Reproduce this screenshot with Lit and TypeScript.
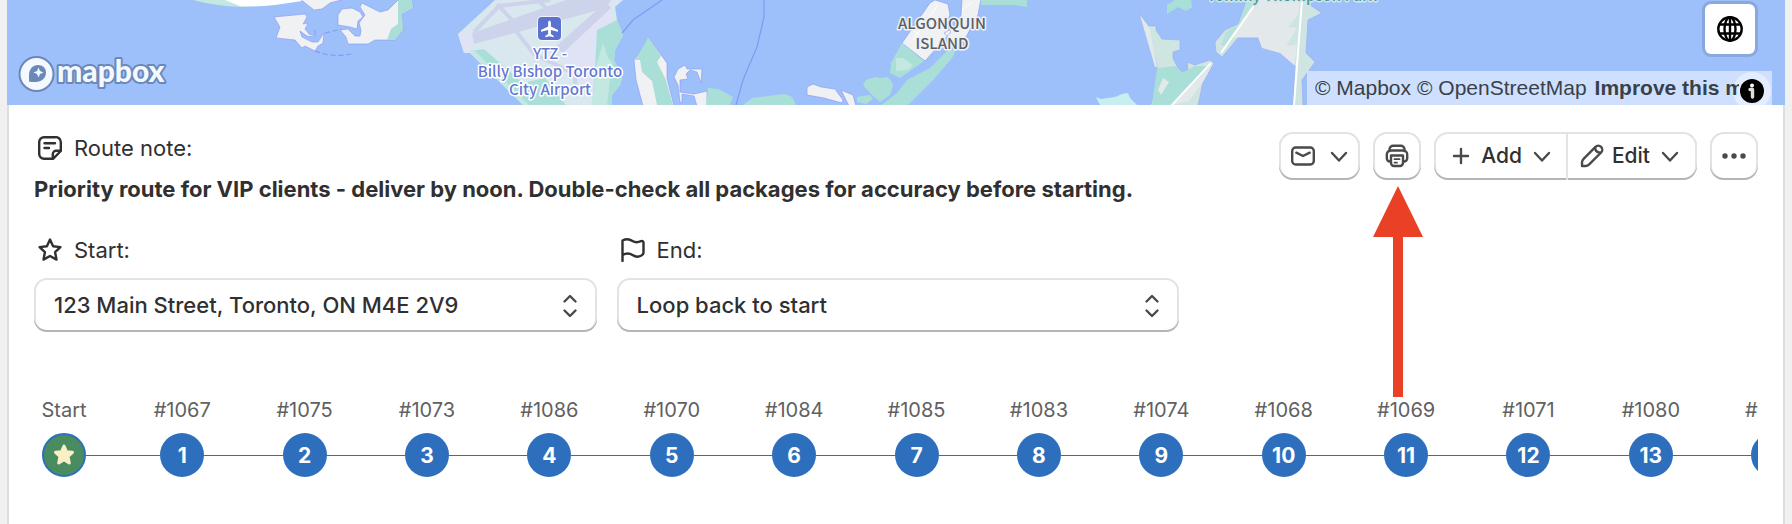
import { LitElement, html, css, svg } from "lit";
import { customElement, property } from "lit/decorators.js";

interface Stop {
  order: string;
  position: number;
}

const ORDERS = [
  "#1067", "#1075", "#1073", "#1086", "#1070", "#1084", "#1085",
  "#1083", "#1074", "#1068", "#1069", "#1071", "#1080", "#1079",
];

const STOPS: Stop[] = ORDERS.map((order, i) => ({ order, position: i + 1 }));

const icons = {
  note: svg`<path d="M9 1.2H17A5 5 0 0 1 22.800 6V15L15 22.8H6A4.8 4.8 0 0 1 1.2 18V6A4.8 4.8 0 0 1 6 1.2Z"/><path d="M22.6 14.8H18A3.2 3.2 0 0 0 14.8 18V22.6"/><path d="M6.5 7.2H17M6.5 12H11"/>`,
  star: svg`<path d="M12 1.6L15.1 8.2L22.4 9.1L17.1 14.2L18.5 21.6L12 18L5.5 21.6L6.9 14.2L1.6 9.1L8.9 8.2Z"/>`,
  flag: svg`<path d="M1.5 23V2.5C5 .7 8.500 1 11.500 3C14.500 5 17 4.500 20 3.200C21.500 2.600 22.500 3.400 22.500 4.800V14.500C22.500 16 21.500 17 20 17.800C17 19.300 14.500 19 11.500 17C8.500 15 5 15 1.500 17"/>`,
  mail: svg`<rect x="1.200" y="3.500" width="21.600" height="17" rx="3.500"/><path d="M5.300 8.700L12 12L18.700 8.700"/>`,
  down: svg`<path d="M5 9L12 16.500L19 9"/>`,
  print: svg`<path d="M4.500 7V5.500A3.700 3.700 0 0 1 8.200 1.800H15.800A3.700 3.700 0 0 1 19.500 5.500V7"/><path d="M5.500 17.500H5A3.200 3.200 0 0 1 1.800 14.300V10.500A4 4 0 0 1 5.800 6.500H18.200A4 4 0 0 1 22.200 10.500V14.300A3.200 3.200 0 0 1 19 17.500H18.500"/><path d="M6 11.500H18V19A3 3 0 0 1 15 22H9A3 3 0 0 1 6 19Z"/><path d="M9.500 15.200H14.500M9.500 18.600H12" stroke-width="1.800"/>`,
  plus: svg`<path d="M12 5V19M5 12H19"/>`,
  pencil: svg`<path d="M2 22V18.500C2 17 2.600 15.800 3.600 14.800L15.500 2.900A3.900 3.900 0 0 1 21.100 8.500L9.200 20.400C8.200 21.400 7 22 5.500 22Z"/><path d="M15.200 3.800Q15 8 20.200 8.800"/>`,
  sort: svg`<path d="M6.500 7.500L12 2L17.500 7.500M6.500 16.500L12 22L17.500 16.500"/>`,
};

@customElement("ui-icon")
class UiIcon extends LitElement {
  static styles = css`
    :host { display: inline-flex; flex: none; }
    .glyph {
      width: 24px; height: 24px; fill: none; stroke: currentColor;
      stroke-width: 2.4; stroke-linecap: round; stroke-linejoin: round;
    }
  `;
  @property() name: keyof typeof icons = "note";
  render() {
    return html`<svg class="glyph" viewBox="0 0 24 24" aria-hidden="true">${icons[this.name]}</svg>`;
  }
}

@customElement("route-map")
class RouteMap extends LitElement {
  static styles = css`
    :host { display: block; position: relative; height: 105px; overflow: hidden; background: #9dc0fb; }
    .canvas { display: block; width: 100%; height: 105px; }
    .land { fill: #f0f1f2; stroke: #8b92f5; stroke-width: 0.6; }
    .park { fill: #aadfd8; }
    .meadow { fill: #c3e8e1; }
    .shore { fill: #cfe5e1; stroke: #9da5f5; stroke-width: 0.6; }
    .sand { fill: #e3e9ea; }
    .shoal { fill: #c8eff0; }
    .field { fill: #d9e8ee; }
    .apron { fill: #dfe3f5; }
    .runway { fill: #cdd3ea; }
    .taxi { fill: none; stroke: #cdd3ea; stroke-width: 4; }
    .road { fill: none; stroke: #fff; stroke-width: 2; }
    .street { fill: none; stroke: #fff; stroke-width: 1; }
    .ferry { fill: none; stroke: #7d9cf0; stroke-width: 1.2; }
    .label {
      font: 500 15px "Noto Sans CJK SC", "Noto Sans", sans-serif;
      text-anchor: middle; paint-order: stroke; stroke: #fff; stroke-width: 3; stroke-linejoin: round;
    }
    .airport { fill: #6478d3; }
    .island { fill: #5c6065; stroke: #eef1f5; }
    .green { fill: #4f9a86; stroke: #cfe5f0; }
    .brand {
      font: 900 30px Lato, sans-serif; fill: #f4f8ff; paint-order: stroke;
      stroke: #6b88ba; stroke-width: 4; stroke-linejoin: round;
    }
    .style-switch {
      position: absolute; top: 4px; right: 30px; width: 50px; height: 50px; padding: 12px;
      border: 0; border-radius: 6px; background: #fff; box-shadow: 0 0 0 3px rgba(0, 0, 0, 0.12);
    }
    .globe { display: block; width: 26px; height: 26px; fill: none; stroke: #000; stroke-width: 2.4; }
    .attribution {
      position: absolute; right: 13px; bottom: 0; width: 465px; height: 34px;
      box-sizing: border-box; padding: 0 33px 0 8px; overflow: hidden;
      background: rgba(255, 255, 255, 0.5);
      font: 21px/34px "Liberation Sans", Arial, sans-serif;
    }
    .credits { position: relative; display: flex; gap: 6px; overflow: hidden; white-space: nowrap; }
    .credit { color: #38414a; text-decoration: none; }
    .improve { margin-left: 2px; font-weight: 700; }
    .info {
      position: absolute; right: 1px; top: 1px; width: 38px; height: 38px; padding: 7px;
      border: 0; border-radius: 50%; background: #e4edff;
    }
    .info-glyph { display: block; width: 24px; height: 24px; }
  `;

  render() {
    return html`
      <svg class="canvas" viewBox="7 0 1778 105" preserveAspectRatio="xMinYMin slice" role="img" aria-label="Map of the Toronto Islands">
        <path class="meadow" d="M193 0Q215 6 242 7L262 6L300 0Z"/>
        <path fill="#fff" d="M225 0L240 6Q255 7 275 5L302 1V0Z"/>
        <path class="land" d="M300 -1L314 10L322 9L330 3L345 -1Z"/>
        <path class="land" d="M274 17L305 14L307 17L303 24L308 23L305 29L309 34L315 36L315 30L316 37L307 36L300 31L302 37L312 42L318 42L324 33L323 43L318 46L315 51L305 46L302 48L295 40L276 38L280 27Z"/>
        <path class="land" d="M342 9L352 8L360 12L363 17L358 21L357 29L350 27L338 25L338 15Z"/>
        <path class="land" d="M362 3L380 12L388 10L398 0H412L413 8L402 14L403 30L395 40H375L368 44H348L346 37L340 30L348 29L355 36L360 36L361 30L359 23L365 15L360 7Z"/>
        <path class="park" d="M398 0H412L413 8L402 14L403 30L395 40H387L391 29L398 24V14Z"/>
        <path class="ferry" d="M315 51Q333 58 351 54M325 33L342 29" stroke-dasharray="5 3"/>

        <path class="field" d="M495 0L458 34L464 53H470L523 105H612V95L620 85L622 78L614 60L615 50L623 35L617 20L615 7L623 0Z"/>
        <path class="apron" d="M458 34L464 53L475 50L472 42L474 32ZM608 8L560 55L590 90L592 105H612V0H623Z M500 3L512 1L520 6L504 12Z"/>
        <path class="runway" d="M472 33L474 44L606 8L611 0H566ZM555 47L563 53L611 8L606 2Z"/>
        <path class="taxi" d="M474 32L499 6L550 0M497 4L512 20M538 0L546 8M515 30L534 54L575 74V84"/>
        <path class="park" d="M470 51L484 49L523 83L545 78L566 105H523ZM597 30L617 20L623 35L615 50L614 60L622 78L620 85L612 95V105H592L595 68Z"/>
        <path class="meadow" d="M470 51H475L529 105H523ZM603 43L608 58L612 62L607 105H592L596 66Z"/>

        <path class="ferry" d="M662 0L633 20L622 33M764 0V17L757 47L743 80L736 105"/>
        <path class="land" d="M648 37L667 63V78L674 106H643L636 80L634 60L643 48Z"/>
        <path class="park" d="M648 37L661 56L657 62L666 80L673 105H657L652 81L642 72L640 60H635L644 45Z"/>
        <path class="land" d="M674 77L678 69L685 65L687 69L702 69L701 83L697 72L690 70L686 74L688 79L680 80V92L694 94L707 91V106H697L694 96L682 94V103L680 102L678 85Z"/>
        <path class="park" d="M708 88L718 89L733 97L730 105H706ZM743 105L752 98L785 94L792 97L796 105Z"/>
        <path class="land" d="M807 87L813 84L821 87L835 89L843 100L842 103L824 98L807 95ZM841 90L853 95L856 106H849Z"/>
        <path class="park" d="M863 85L866 80L875 77L890 80V95L880 102L870 93ZM857 97L870 95L873 99L866 104L857 102Z"/>

        <path class="land" d="M935 0L948 4L950 15L945 25L951 32L925 61L902 43L930 3ZM962 -1H981L978 15L966 37L955 45L944 33L958 25L961 15Z"/>
        <path class="street" d="M921 16L940 31M912 29L933 45M962 10L972 2M938 5L912 41"/>
        <path class="park" d="M902 43L924 61L900 78L890 73L891 63ZM948 50L956 50L952 58L933 80L907 106H880L897 93L907 80L930 68ZM880 78L888 77L893 84L891 93L880 100ZM981 0H1027V7L1015 5L981 5Z"/>
        <path class="meadow" d="M896 58L903 58L913 65L908 70L896 71Z"/>
        <path class="park" d="M1167 14V5L1175 0H1191L1192 7L1186 11L1178 7Z"/>
        <path class="shoal" d="M1096 97L1101 99L1115 97L1122 94L1128 93L1130 98L1137 105H1100Z"/>
        <path class="shore" d="M1139 13L1149 26L1156 26V30L1162 39L1180 40V50L1173 52L1173 58L1178 68L1182 72L1188 70L1187 62L1195 65L1210 60L1214 63L1203 82L1198 106H1150L1157 90V67L1151 40Z"/>
        <path class="park" d="M1157 68L1176 66L1182 73L1195 66L1207 66L1172 105H1152Z"/>
        <path class="sand" d="M1213 64L1172 105L1189 101L1203 82ZM1158 90L1163 78L1169 82L1161 95ZM1140 15L1150 30L1157 67H1155Z"/>
        <path class="road" d="M1211 63L1171 106"/>
        <path class="shore" d="M1247 -1L1238 24L1225 30L1215 42L1216 52L1222 57L1238 38H1258L1262 48L1280 53L1295 66L1293 106H1303L1302 80L1315 62L1306 53L1308 20L1322 13L1310 5L1312 -1Z"/>
        <path class="sand" d="M1258 0L1232 37H1258L1262 48L1280 53L1294 65L1297 45L1286 46L1297 28L1288 27L1298 15L1300 0Z"/>
        <path class="park" d="M1247 0H1256L1225 46L1221 45L1226 32L1238 25Z" opacity="0.7"/>
        <path class="road" d="M1258 0L1221 53M1302 0L1294 105"/>

        <text class="label green" x="1292" y="1">Tommy Thompson Park</text>
        <rect x="537" y="16" width="25" height="25" rx="5" fill="#fff" opacity="0.7"/>
        <rect x="538" y="17" width="23" height="23" rx="4" fill="#5b72d0"/>
        <path fill="#fff" d="M549.500 20.500Q550.900 20.500 550.900 23V26.500L558 30V31.700L550.900 30V34L553.700 36V37.200L549.500 36.300L545.300 37.200V36L548.100 34V30L541 31.700V30L548.100 26.500V23Q548.100 20.500 549.500 20.500Z"/>
        <text class="label airport" x="550" y="59">YTZ -</text>
        <text class="label airport" x="550" y="77">Billy Bishop Toronto</text>
        <text class="label airport" x="550" y="95">City Airport</text>
        <text class="label island" x="942" y="29">ALGONQUIN</text>
        <text class="label island" x="942" y="49">ISLAND</text>

        <circle cx="36.500" cy="74" r="17" fill="#f4f8ff" stroke="#6b88ba" stroke-width="2"/>
        <path fill="#6b88ba" d="M29 81.500V75C29 69 33 65 38 65C42.500 65 46 68 46 72.500C46 78 41.500 82 35.500 82Q31 82 29 81.500Z"/>
        <path fill="#f4f8ff" d="M38.500 67.500L40 71L43.500 72.500L40 74L38.500 77.500L37 74L33.500 72.500L37 71Z"/>
        <text class="brand" x="57" y="82">mapbox</text>
      </svg>
      <button class="style-switch" type="button" aria-label="Change map style">
        <svg class="globe" viewBox="0 0 26 26"><circle cx="13" cy="13" r="11.700"/><ellipse cx="13" cy="13" rx="5.500" ry="11.700"/><path d="M13 1V25M2.500 8.500H23.500M2.500 17.500H23.500"/></svg>
      </button>
      <div class="attribution">
        <button class="info" type="button" aria-label="Toggle attribution">
          <svg class="info-glyph" viewBox="0 0 24 24"><circle cx="12" cy="12" r="12"/><circle cx="12" cy="6.500" r="2" fill="#fff"/><path d="M10 10.500H12.500V18" fill="none" stroke="#ddd" stroke-width="3.400" stroke-linecap="round" stroke-linejoin="round"/></svg>
        </button>
        <div class="credits">
          <a class="credit" href="#mapbox">© Mapbox</a>
          <a class="credit" href="#openstreetmap">© OpenStreetMap</a>
          <a class="credit improve" href="#improve">Improve this map</a>
        </div>
      </div>
    `;
  }
}

@customElement("route-stops")
class RouteStops extends LitElement {
  static styles = css`
    :host { display: block; overflow: hidden; }
    .track { display: flex; margin: 0; padding: 0; list-style: none; }
    .stop {
      flex: 0 0 7.1%; display: grid; grid-template-columns: 1fr 44px 1fr;
      align-items: center; row-gap: 11px;
    }
    .start { flex: 0 0 87px; grid-template-columns: 44px 1fr; box-sizing: border-box; padding-left: 8px; }
    .name { grid-column: 1 / -1; text-align: center; font-size: 20px; line-height: 24px; color: #616161; }
    .start .name { grid-column: 1; display: flex; justify-content: center; }
    .line { height: 1px; background: #2e6fbd; }
    .start .line { grid-column: 2; grid-row: 2; }
    .dot {
      display: flex; align-items: center; justify-content: center; box-sizing: border-box;
      width: 44px; height: 44px; border-radius: 50%; background: #2e6fbd;
      color: #fff; font-size: 21px; font-weight: 700;
    }
    .home { grid-column: 1; grid-row: 2; border: 2px solid #2e6fbd; background: #488c60; }
    .home-star { width: 24px; height: 24px; fill: #fbefc4; stroke: #fbefc4; stroke-width: 3; stroke-linejoin: round; }
  `;
  @property({ attribute: false }) stops: Stop[] = [];
  render() {
    return html`
      <ol class="track">
        <li class="stop start">
          <span class="name">Start</span>
          <span class="dot home"><svg class="home-star" viewBox="0 0 24 24"><path d="M12 3L14.500 8.700L20.500 9.300L16 13.500L17.300 20L12 16.700L6.700 20L8 13.500L3.500 9.300L9.500 8.700Z"/></svg></span>
          <span class="line"></span>
        </li>
        ${this.stops.map(
          (s) => html`<li class="stop">
            <span class="name">${s.order}</span>
            <span class="line"></span><span class="dot">${s.position}</span><span class="line"></span>
          </li>`,
        )}
      </ol>
    `;
  }
}

@customElement("app-root")
class AppRoot extends LitElement {
  static styles = css`
    :host {
      display: block; min-height: 100vh; box-sizing: border-box; padding: 0 7px;
      background: #f0f0f0; color: #303030; font-family: Inter, "Liberation Sans", sans-serif;
    }
    .card { min-height: 100vh; background: #fff; box-shadow: inset 2px 0 #dedede, inset -2px 0 #dedede; }
    .body { padding: 27px 27px 46px; }
    .top { display: flex; align-items: flex-start; gap: 100px; }
    .details { flex: 1; min-width: 0; padding-top: 2px; }
    .caption { display: flex; align-items: center; gap: 12px; padding-left: 4px; font-size: 22px; line-height: 28px; }
    .note { margin: 13px 0 33px; font-size: 22px; line-height: 28px; font-weight: 700; }
    .ends { display: grid; grid-template-columns: 1fr 1fr; gap: 20px; }
    .field { display: flex; flex-direction: column; gap: 14px; }
    .picker { position: relative; }
    .select {
      display: block; width: 100%; height: 54px; padding: 0 56px 0 20px; appearance: none;
      border: 0; border-radius: 13px; background: #fff; color: #303030;
      box-shadow: inset 0 -2px #b5b5b5, inset 0 0 0 2px #e3e3e3;
      font: 500 22px/28px Inter, "Liberation Sans", sans-serif;
    }
    .sorter { position: absolute; right: 15px; top: 16px; color: #4a4a4a; pointer-events: none; }
    .tools { display: flex; align-items: flex-start; gap: 13px; }
    .group, .btn.single {
      border-radius: 14px; background: #fff;
      box-shadow: inset 0 -2px #b5b5b5, inset 0 0 0 2px #e3e3e3;
    }
    .group { display: flex; }
    .btn {
      display: flex; align-items: center; height: 48px; border: 0; padding: 0 12px; gap: 8px;
      background: none; color: #4a4a4a; font: 500 21px/24px Inter, "Liberation Sans", sans-serif;
    }
    .text { color: #303030; }
    .btn.add { padding: 0 12px 0 15px; }
    .btn.edit { padding: 0 15px 0 14px; box-shadow: inset 2px 0 #e3e3e3; }
    .btn.mail { gap: 12px; padding: 0 9px 0 12px; }
    .dots { width: 24px; height: 24px; fill: #4a4a4a; }
    .target { position: relative; }
    .arrow { position: absolute; left: 0; top: 54px; width: 50px; height: 211px; fill: #ea4025; pointer-events: none; }
    .timeline { display: block; margin-top: 66px; }
  `;

  render() {
    return html`
      <main class="card">
        <route-map></route-map>
        <section class="body">
          <div class="top">
            <div class="details">
              <div class="caption"><ui-icon name="note"></ui-icon>Route note:</div>
              <p class="note">Priority route for VIP clients - deliver by noon. Double-check all packages for accuracy before starting.</p>
              <div class="ends">
                <div class="field">
                  <label class="caption" for="start"><ui-icon name="star"></ui-icon>Start:</label>
                  <div class="picker">
                    <select class="select" id="start"><option>123 Main Street, Toronto, ON M4E 2V9</option></select>
                    <ui-icon class="sorter" name="sort"></ui-icon>
                  </div>
                </div>
                <div class="field">
                  <label class="caption" for="end"><ui-icon name="flag"></ui-icon>End:</label>
                  <div class="picker">
                    <select class="select" id="end"><option>Loop back to start</option></select>
                    <ui-icon class="sorter" name="sort"></ui-icon>
                  </div>
                </div>
              </div>
            </div>
            <div class="tools">
              <button class="btn single mail" type="button" aria-label="Send route"><ui-icon name="mail"></ui-icon><ui-icon name="down"></ui-icon></button>
              <div class="target">
                <button class="btn single" type="button" aria-label="Print route"><ui-icon name="print"></ui-icon></button>
                <svg class="arrow" viewBox="0 0 50 211" aria-hidden="true"><path d="M25 0L50 51H30V211H20V51H0Z"/></svg>
              </div>
              <div class="group">
                <button class="btn add" type="button"><ui-icon name="plus"></ui-icon><span class="text">Add</span><ui-icon name="down"></ui-icon></button>
                <button class="btn edit" type="button"><ui-icon name="pencil"></ui-icon><span class="text">Edit</span><ui-icon name="down"></ui-icon></button>
              </div>
              <button class="btn single" type="button" aria-label="More actions">
                <svg class="dots" viewBox="0 0 24 24"><circle cx="3" cy="12" r="2.700"/><circle cx="12" cy="12" r="2.700"/><circle cx="21" cy="12" r="2.700"/></svg>
              </button>
            </div>
          </div>
          <route-stops class="timeline" .stops=${STOPS}></route-stops>
        </section>
      </main>
    `;
  }
}
